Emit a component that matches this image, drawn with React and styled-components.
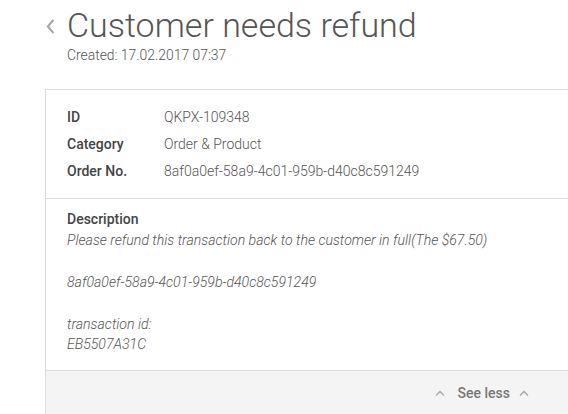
import React from "react";
import styled, { createGlobalStyle } from "styled-components";

const Global = createGlobalStyle`
  html, body { margin: 0; padding: 0; background: #fff; overflow: hidden; }
  body { font-family: Roboto, "Noto Sans", sans-serif; }
`;

const Page = styled.div`
  width: 568px;
  height: 414px;
  overflow: hidden;
  padding-left: 45px;
  box-sizing: border-box;
`;

const Header = styled.div`
  display: flex;
  align-items: flex-start;
  padding-top: 5px;
`;

const Back = styled.div`
  width: 22px;
  padding: 14px 0 0 1px;
  box-sizing: border-box;
  display: flex;
`;

const TitleBlock = styled.div`
  display: flex;
  flex-direction: column;
`;

const Title = styled.h1`
  margin: 0;
  font-weight: 300;
  font-size: 34px;
  line-height: 40px;
  color: #555;
`;

const Created = styled.div`
  margin-top: 2px;
  font-size: 13.9px;
  font-weight: 300;
  color: #555;
  line-height: 16px;
`;

const Card = styled.div`
  margin-top: 26px;
  width: 560px;
  border: 1px solid #dcdcdc;
  background: #fff;
`;

const Info = styled.div`
  padding: 13px 0 14px 21px;
  border-bottom: 1px solid #dcdcdc;
`;

const Row = styled.div`
  display: flex;
  height: 27px;
  align-items: center;
  font-size: 14px;
`;

const Label = styled.div`
  width: 97px;
  font-weight: 500;
  color: #444;
`;

const Value = styled.div`
  font-weight: 300;
  color: #555;
`;

const Desc = styled.div`
  padding: 10px 0 15px 21px;
  font-size: 14px;
  line-height: 20.9px;
`;

const DescLabel = styled.div`
  font-weight: 500;
  color: #444;
`;

const DescLine = styled.div`
  font-style: italic;
  font-weight: 300;
  font-size: 14.1px;
  color: #555;
  min-height: 20.9px;
`;

const Footer = styled.div`
  border-top: 1px solid #dcdcdc;
  background: #f4f4f4;
  height: 60px;
  display: flex;
  justify-content: flex-end;
  padding-right: 77px;
  padding-top: 13px;
  box-sizing: border-box;
`;

const SeeLess = styled.div`
  display: flex;
  align-items: center;
  height: 18px;
  font-size: 14px;
  font-weight: 500;
  color: #777;
`;

const SeeText = styled.span`
  margin: 0 9px 0 13px;
`;

const UpChevron = () => (
  <svg width="10" height="6" viewBox="0 0 10 6" fill="none">
    <path d="M1 5.5 L5 1.5 L9 5.5" stroke="#aaa" strokeWidth="1.5" />
  </svg>
);

const BackIcon = () => (
  <svg width="9" height="15" viewBox="0 0 9 15" fill="none">
    <path d="M7.5 1 L1.8 7.5 L7.5 14" stroke="#a3a3a3" strokeWidth="1.9" />
  </svg>
);

export default function App() {
  const rows = [
    ["ID", "QKPX-109348"],
    ["Category", "Order & Product"],
    ["Order No.", "8af0a0ef-58a9-4c01-959b-d40c8c591249"],
  ];
  const lines = [
    "Please refund this transaction back to the customer in full(The $67.50)",
    "",
    "8af0a0ef-58a9-4c01-959b-d40c8c591249",
    "",
    "transaction id:",
    "EB5507A31C",
  ];
  return (
    <>
      <Global />
      <Page>
        <Header>
          <Back>
            <BackIcon />
          </Back>
          <TitleBlock>
            <Title>Customer needs refund</Title>
            <Created>Created: 17.02.2017 07:37</Created>
          </TitleBlock>
        </Header>
        <Card>
          <Info>
            {rows.map(([l, v]) => (
              <Row key={l}>
                <Label>{l}</Label>
                <Value>{v}</Value>
              </Row>
            ))}
          </Info>
          <Desc>
            <DescLabel>Description</DescLabel>
            {lines.map((t, i) => (
              <DescLine key={i}>{t}</DescLine>
            ))}
          </Desc>
          <Footer>
            <SeeLess>
              <UpChevron />
              <SeeText>See less</SeeText>
              <UpChevron />
            </SeeLess>
          </Footer>
        </Card>
      </Page>
    </>
  );
}
